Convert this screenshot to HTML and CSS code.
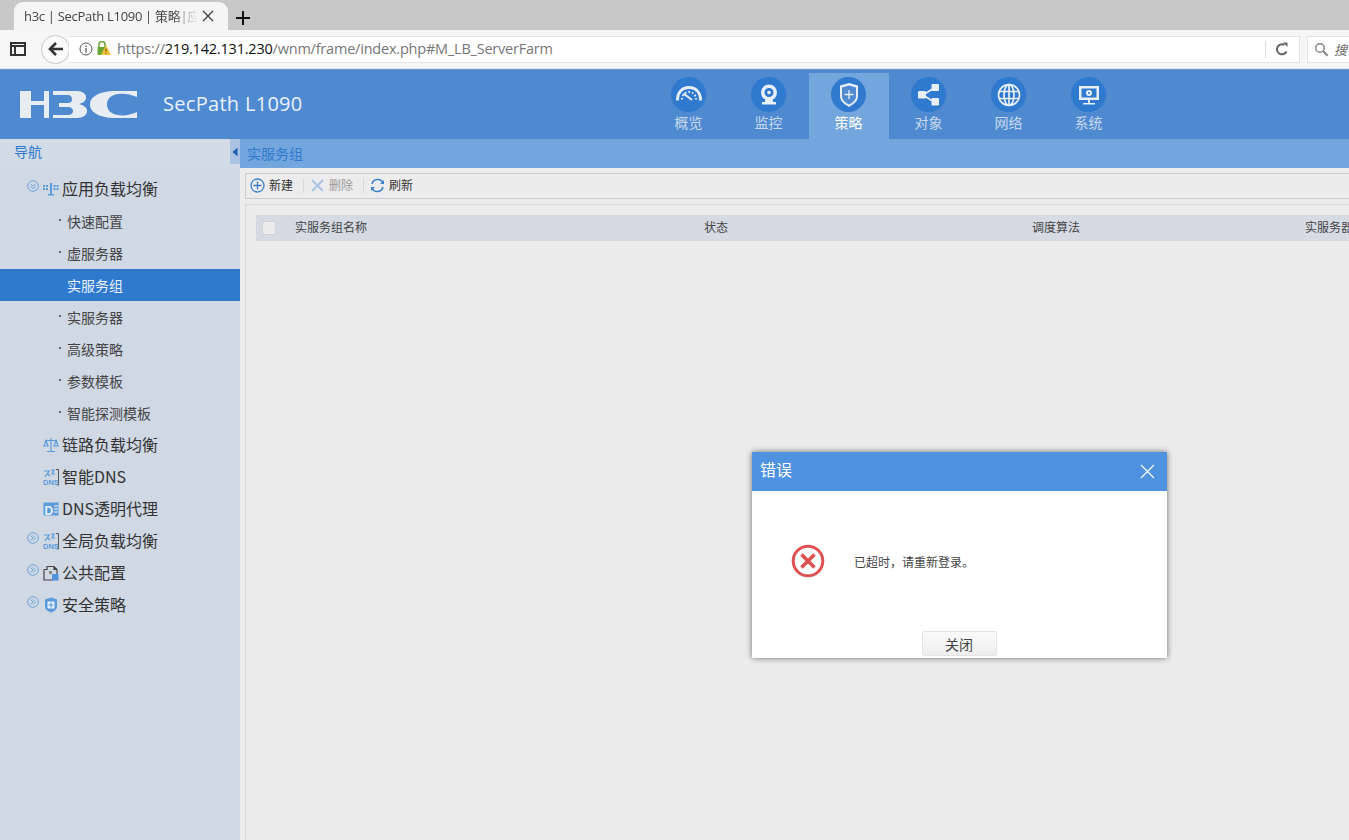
FILE: index.html
```html
<!DOCTYPE html>
<html lang="zh">
<head>
<meta charset="utf-8">
<title>h3c | SecPath L1090</title>
<link rel="stylesheet" href="styles.css">
</head>
<body>
<div class="tabbar">
  <div class="tab">
    <span class="tab-title">h3c | SecPath L1090 | 策略|应用负载均衡</span>
    <svg class="tab-x" width="14" height="14" viewBox="0 0 14 14"><path d="M2 2l10 10M12 2L2 12" stroke="#333" stroke-width="1.1" fill="none"/></svg>
  </div>
  <svg class="tab-new" width="14" height="14" viewBox="0 0 14 14"><path d="M7 0v14M0 7h14" stroke="#111" stroke-width="2"/></svg>
</div>
<div class="toolbar">
  <svg class="sidebar-btn" width="16" height="14" viewBox="0 0 16 14"><path d="M1 1h14v12H1zM1 4h14M5 4v9" stroke="#333" stroke-width="2" fill="none"/></svg>
  <div class="back-btn"><svg width="16" height="14" viewBox="0 0 16 14"><path d="M8 1L2 7l6 6M2 7h13" stroke="#333" stroke-width="2.6" fill="none"/></svg></div>
  <div class="urlbar">
    <svg class="info" width="16" height="16" viewBox="0 0 16 16"><circle cx="8" cy="8" r="6" stroke="#555" fill="none"/><path d="M8 7v4.500M8 4.500v1.500" stroke="#555" stroke-width="1.300"/></svg>
    <svg class="lock" width="14" height="16" viewBox="0 0 14 16"><path d="M2 6V3.500a3 3 0 0 1 6 0V6" stroke="#6aa53a" stroke-width="1.600" fill="none"/><rect x="0.500" y="6" width="9" height="8" fill="#6aa53a"/><path d="M9 4l5 10H4z" fill="#f2c33a"/><path d="M9 7.500v3.500M9 12v1" stroke="#6b5310"/></svg>
    <span class="url"><span class="url-dim">https://</span>219.142.131.230<span class="url-dim">/wnm/frame/index.php#M_LB_ServerFarm</span></span>
    <span class="reload"><svg width="14" height="14" viewBox="0 0 14 14"><path d="M11.500 9.500A5 5 0 1 1 9.500 3" stroke="#666" stroke-width="2" fill="none"/><path d="M8 0.500h4.500V5z" fill="#666"/></svg></span>
  </div>
  <div class="searchbar">
    <svg width="15" height="15" viewBox="0 0 15 15"><circle cx="6" cy="6" r="4.300" stroke="#888" stroke-width="1.500" fill="none"/><path d="M9.200 9.200l4.500 4.500" stroke="#888" stroke-width="2"/></svg>
    <span class="search-text">搜</span>
  </div>
</div>

<header class="app-header">
  <svg class="logo" width="118" height="29" viewBox="0 0 118 29">
    <path fill="#e8edf3" d="M0 1h11v10h13V1h5v27h-5V15H11v13H0z"/>
    <path fill="#e8edf3" d="M33 1h24c6 0 9 3 9 6.500S63 13 59 14c4 1 8 3 8 7s-4 7-10 7H33v-3h15c3 0 5-1.500 5-4s-2-4-5-4H39v-4h9c3 0 4-1.500 4-3.500S51 5 48 5H33z"/>
    <path fill="#e8edf3" d="M117 1v6c-7-3-13-4-19-3-7 1-11 5-11 10.500S91 24 98 25c6 1 12 0 19-3v6H95C81 28 70 23 70 14.500S81 1 95 1z"/>
  </svg>
  <div class="product">SecPath L1090</div>
  <nav class="topnav">
    <div class="topnav-item">
      <span class="topnav-icon"><svg width="26" height="24" viewBox="0 0 26 24"><path d="M1.500 17.500C1 10 6 4.500 13 4.500S25 10 24.500 17.500" fill="none" stroke="#e8eff8" stroke-width="2.800"/><path d="M6 16.500C6 12 9 9 13 9s7 3 7 7.500" fill="none" stroke="#e8eff8" stroke-width="2" stroke-dasharray="1.600 2"/><path d="M7.500 10.500l8.500 6.500" stroke="#e8eff8" stroke-width="2"/></svg></span>
      <span>概览</span>
    </div>
    <div class="topnav-item">
      <span class="topnav-icon"><svg width="24" height="24" viewBox="0 0 24 24"><circle cx="12" cy="9.500" r="8" fill="#e8eff8"/><circle cx="12" cy="9.500" r="4.500" fill="#2f79cf"/><circle cx="12" cy="9.500" r="1.800" fill="#e8eff8"/><path d="M8 17h8v2h3v2.500H5V19h3z" fill="#e8eff8"/></svg></span>
      <span>监控</span>
    </div>
    <div class="topnav-item active">
      <span class="topnav-icon"><svg width="24" height="26" viewBox="0 0 24 26" fill="none" stroke="#e8eff8"><path d="M12 1l9 2.500V14c0 5-4 8-9 11C7 22 3 19 3 14V3.500z" fill="#e8eff8" stroke="none"/><path d="M12 3.500l7 2V14c0 4-3 6.500-7 8.500-4-2-7-4.500-7-8.500V5.500z" fill="#4f8ad1" stroke="none"/><path d="M12 8v9M7.500 12.500h9" stroke-width="1.300"/></svg></span>
      <span>策略</span>
    </div>
    <div class="topnav-item">
      <span class="topnav-icon"><svg width="24" height="24" viewBox="0 0 24 24" fill="#e8eff8"><path d="M17 5L6 12l11 7" stroke="#e8eff8" stroke-width="1.600" fill="none"/><rect x="1" y="8" width="8" height="7.500" rx="1"/><rect x="14.500" y="1" width="7.500" height="7" rx="1"/><rect x="14.500" y="15" width="7.500" height="7.500" rx="1"/></svg></span>
      <span>对象</span>
    </div>
    <div class="topnav-item">
      <span class="topnav-icon"><svg width="24" height="24" viewBox="0 0 24 24" fill="none" stroke="#e8eff8" stroke-width="1.700"><circle cx="12" cy="12" r="10.500"/><ellipse cx="12" cy="12" rx="5" ry="10.500"/><path d="M12 1.500v21M2 8.500h20M2 15.500h20"/></svg></span>
      <span>网络</span>
    </div>
    <div class="topnav-item">
      <span class="topnav-icon"><svg width="24" height="24" viewBox="0 0 24 24"><path d="M2 3h20v14H2z" fill="#e8eff8"/><path d="M4.500 5.500h15v9h-15z" fill="#2f79cf"/><circle cx="12" cy="10" r="3" fill="#e8eff8"/><circle cx="12" cy="10" r="1" fill="#2f79cf"/><path d="M11 17h2v3h5v1.500H6V20h5z" fill="#e8eff8"/></svg></span>
      <span>系统</span>
    </div>
  </nav>
</header>

<div class="app-body">
  <aside class="sidebar">
    <div class="nav-title"><span class="nav-label">导航</span><span class="collapse"><svg width="6" height="10" viewBox="0 0 6 10"><path d="M5.500 0.500v9L0.500 5z" fill="#1d5fae"/></svg></span></div>
    <ul class="tree">
      <li class="tree-row top">
        <svg class="chev" width="12" height="12" viewBox="0 0 12 12"><circle cx="6" cy="6" r="5.300" fill="none" stroke="#6ea3da"/><path d="M3.500 4l2.500 2 2.500-2M3.500 6.500L6 8.500l2.500-2" fill="none" stroke="#6ea3da"/></svg>
        <svg class="ico" width="16" height="14" viewBox="0 0 16 14" fill="#5b9bdc"><rect x="7" y="1" width="2" height="11"/><rect x="5" y="12" width="6" height="1.500"/><rect x="0" y="3" width="2" height="2"/><rect x="3" y="3" width="2" height="2"/><rect x="0" y="6" width="2" height="2"/><rect x="3" y="6" width="2" height="2"/><rect x="10.500" y="3" width="2" height="2"/><rect x="13.500" y="3" width="2" height="2"/><rect x="10.500" y="6" width="2" height="2"/><rect x="13.500" y="6" width="2" height="2"/></svg>
        <span class="label">应用负载均衡</span>
      </li>
      <li class="tree-row sub"><span class="dot"></span>快速配置</li>
      <li class="tree-row sub"><span class="dot"></span>虚服务器</li>
      <li class="tree-row sub selected">实服务组</li>
      <li class="tree-row sub"><span class="dot"></span>实服务器</li>
      <li class="tree-row sub"><span class="dot"></span>高级策略</li>
      <li class="tree-row sub"><span class="dot"></span>参数模板</li>
      <li class="tree-row sub"><span class="dot"></span>智能探测模板</li>
      <li class="tree-row top">
        <span class="chev-gap"></span>
        <svg class="ico" width="16" height="16" viewBox="0 0 16 16" fill="none" stroke="#5b9bdc" stroke-width="1.200"><path d="M8 1v13M4 14.500h8M2 3.500h12M3 3.500L1 9h4zM13 3.500L11 9h4z"/></svg>
        <span class="label">链路负载均衡</span>
      </li>
      <li class="tree-row top">
        <span class="chev-gap"></span>
        <svg class="ico" width="16" height="18" viewBox="0 0 16 18"><path d="M1 3h5L2 9M4 5l3 3M8 2h3l-2 4h3" fill="none" stroke="#5b9bdc" stroke-width="1.200"/><path d="M13 1.500h2.500V17H14" fill="none" stroke="#555"/><text class="mini-dns" x="0" y="16.500">DNS</text></svg>
        <span class="label">智能DNS</span>
      </li>
      <li class="tree-row top">
        <span class="chev-gap"></span>
        <svg class="ico" width="16" height="14" viewBox="0 0 16 14"><rect x="0.500" y="0.500" width="15" height="13" fill="#5b9bdc"/><text class="mini-d" x="1.500" y="12.500">D</text><path d="M11 4h4M11 7h4M11 10h4" stroke="#d0d8e4" stroke-width="1.300"/></svg>
        <span class="label">DNS透明代理</span>
      </li>
      <li class="tree-row top">
        <svg class="chev" width="12" height="12" viewBox="0 0 12 12"><circle cx="6" cy="6" r="5.300" fill="none" stroke="#6ea3da"/><path d="M3.500 3.500L6 6 3.500 8.500M6 3.500L8.500 6 6 8.500" fill="none" stroke="#6ea3da"/></svg>
        <svg class="ico" width="16" height="18" viewBox="0 0 16 18"><path d="M1 3h5L2 9M4 5l3 3M8 2h3l-2 4h3" fill="none" stroke="#5b9bdc" stroke-width="1.200"/><path d="M13 1.500h2.500V17H14" fill="none" stroke="#555"/><text class="mini-dns" x="0" y="16.500">DNS</text></svg>
        <span class="label">全局负载均衡</span>
      </li>
      <li class="tree-row top">
        <svg class="chev" width="12" height="12" viewBox="0 0 12 12"><circle cx="6" cy="6" r="5.300" fill="none" stroke="#6ea3da"/><path d="M3.500 3.500L6 6 3.500 8.500M6 3.500L8.500 6 6 8.500" fill="none" stroke="#6ea3da"/></svg>
        <svg class="ico" width="16" height="16" viewBox="0 0 16 16"><path d="M1 4.500h3V1.500h7l3 3v5M10 15H1V4.500M11 1.500v3h3" fill="none" stroke="#444" stroke-width="1.200"/><path d="M6 6h3v3H6z" fill="#888"/><rect x="9" y="9" width="6.500" height="6.500" fill="#4f92df"/></svg>
        <span class="label">公共配置</span>
      </li>
      <li class="tree-row top">
        <svg class="chev" width="12" height="12" viewBox="0 0 12 12"><circle cx="6" cy="6" r="5.300" fill="none" stroke="#6ea3da"/><path d="M3.500 3.500L6 6 3.500 8.500M6 3.500L8.500 6 6 8.500" fill="none" stroke="#6ea3da"/></svg>
        <svg class="ico" width="16" height="16" viewBox="0 0 16 16"><path d="M8 0.500l6 2v7c0 3-3 5-6 6-3-1-6-3-6-6v-7z" fill="#5b9bdc"/><rect x="4.500" y="4.500" width="7" height="7" rx="1" fill="#e8eff8"/><path d="M8 5.500v5M5.500 8h5" stroke="#5b9bdc" stroke-width="1.200"/></svg>
        <span class="label">安全策略</span>
      </li>
    </ul>
  </aside>
  <main class="main">
    <div class="crumb">实服务组</div>
    <div class="actions">
      <span class="action">
        <svg width="15" height="15" viewBox="0 0 15 15" fill="none" stroke="#3b7fc9" stroke-width="1.300"><circle cx="7.500" cy="7.500" r="6.500"/><path d="M7.500 3.500v8M3.500 7.500h8"/></svg><span class="action-text">新建</span>
      </span>
      <span class="sep"></span>
      <span class="action disabled">
        <svg width="15" height="15" viewBox="0 0 15 15"><path d="M2 2l11 11M13 2L2 13" stroke="#a9c4e2" stroke-width="2"/></svg><span class="action-text">删除</span>
      </span>
      <span class="sep"></span>
      <span class="action">
        <svg width="15" height="15" viewBox="0 0 15 15" fill="none" stroke="#3b7fc9" stroke-width="1.500"><path d="M2 6a5.800 5.800 0 0 1 11-1M13 9a5.800 5.800 0 0 1-11 1"/><path d="M14 2v4h-4zM1 13V9h4z" fill="#3b7fc9" stroke="none"/></svg><span class="action-text">刷新</span>
      </span>
    </div>
    <div class="content">
      <div class="thead">
        <span class="check"></span>
        <span class="col col-name">实服务组名称</span>
        <span class="col col-state">状态</span>
        <span class="col col-algo">调度算法</span>
        <span class="col col-real">实服务器</span>
      </div>
    </div>
  </main>
</div>

<section class="dialog">
  <div class="dialog-head">
    <span class="dialog-title">错误</span>
    <svg width="15" height="15" viewBox="0 0 15 15"><path d="M1 1l13 13M14 1L1 14" stroke="#fff" stroke-width="1.100"/></svg>
  </div>
  <div class="dialog-body">
    <svg width="34" height="34" viewBox="0 0 34 34" fill="none" stroke="#de5151"><circle cx="17" cy="17" r="14.800" stroke-width="3"/><path d="M10.500 10.500l13 13M23.500 10.500l-13 13" stroke-width="3.600"/></svg>
    <span class="message">已超时<span class="comma">，</span>请重新登录。</span>
  </div>
  <div class="dialog-foot"><button class="close-btn">关闭</button></div>
</section>
</body>
</html>
```
FILE: styles.css
```css
* { box-sizing: border-box; }
html, body { margin: 0; height: 100%; overflow: hidden; }
body {
  font-family: "Noto Sans CJK SC", "Noto Sans", sans-serif;
  background: #ececec;
  color: #333;
  display: flex;
  flex-direction: column;
  height: 840px;
}
svg { display: block; flex: none; }

.tabbar { height: 30px; background: #c8c8c8; display: flex; align-items: flex-end; padding-left: 14px; flex: none; }
.tab {
  width: 214px; height: 28px; background: #f5f5f5; border-radius: 9px 9px 0 0;
  display: flex; align-items: center; padding: 0 13px 0 10px;
}
.tab-title {
  flex: 1; min-width: 0; white-space: nowrap; overflow: hidden; font: 13px/18px "Open Sans", "Noto Sans CJK SC", sans-serif; color: #444;
  letter-spacing: -0.3px;
  -webkit-mask-image: linear-gradient(to right, #000 85%, transparent);
  mask-image: linear-gradient(to right, #000 85%, transparent);
}
.tab-x { margin-left: 3px; }
.tab-new { margin: 0 0 5px 8px; }

.toolbar { height: 39px; background: #f6f6f6; border-bottom: 1px solid #dfe3e8; display: flex; align-items: center; padding-left: 10px; flex: none; }
.sidebar-btn { margin-right: 15px; }
.back-btn {
  width: 29px; height: 29px; border: 1px solid #c8c8c8; border-radius: 50%; background: #fafafa;
  display: flex; align-items: center; justify-content: center; margin-right: -1px; flex: none;
}
.urlbar {
  width: 1231px; height: 27px; background: #fff; border: 1px solid #e4e4e4; border-left: 0;
  display: flex; align-items: center; padding-left: 9px; flex: none;
}
.info { margin-right: 3px; }
.lock { margin-right: 6px; }
.url { flex: 1; font: 14.500px/20px "Open Sans", sans-serif; color: #111; white-space: nowrap; letter-spacing: -0.21px; }
.url-dim { color: #777; }
.reload { width: 34px; height: 100%; display: flex; align-items: center; justify-content: center; position: relative; }
.reload::before { content: ""; position: absolute; left: 0; top: 4px; bottom: 4px; width: 1px; background: #ddd; }
.searchbar {
  margin-left: 7px; height: 27px; flex: 1; min-width: 0; background: #fff; border: 1px solid #e4e4e4; border-right: 0;
  display: flex; align-items: center; padding-left: 6px; gap: 5px;
}
.search-text { font-size: 13px; font-style: italic; color: #666; white-space: nowrap; }

.app-header { height: 70px; background: #4f8ad1; display: flex; position: relative; flex: none; border-top: 1px solid #6b9ad4; }
.logo { margin: 20px 0 0 20px; }
.product { margin: 19px 0 0 25px; font: 20px/30px "Open Sans", sans-serif; color: #eaf1f9; white-space: nowrap; letter-spacing: 0.3px; }
.topnav { display: flex; margin-left: 346px; padding-top: 3px; }
.topnav-item {
  width: 80px; height: 66px; display: flex; flex-direction: column; align-items: center; color: #c8d9ee; font-size: 14px; line-height: 20px; padding-top: 4px;
}
.topnav-item.active { background: #72a6dc; color: #fff; }
.topnav-icon { width: 35px; height: 35px; border-radius: 50%; background: #2f79cf; display: flex; align-items: center; justify-content: center; }

.app-body { flex: 1; display: flex; min-height: 0; }
.sidebar { width: 240px; background: #d0d8e4; flex: none; }
.nav-title {
  height: 29px; padding-left: 14px; display: flex; justify-content: space-between; align-items: flex-start;
  font-size: 14px; color: #2f79cf; background: #d3dbe6;
}
.nav-label { line-height: 24px; }
.collapse { width: 10px; height: 25px; background: #a9c4e2; display: flex; align-items: center; justify-content: center; }
.tree { list-style: none; margin: 5px 0 0; padding: 0; }
.tree-row { height: 32px; display: flex; align-items: center; white-space: nowrap; }
.tree-row.top { font-size: 16px; color: #333; padding-left: 27px; }
.label { margin-top: -2px; }
.chev { margin: -7px 4px 0 0; }
.chev-gap { width: 16px; flex: none; }
.ico { margin-right: 3px; }
.tree-row.sub { font-size: 14px; color: #444; padding-left: 59px; }
.dot { width: 2px; height: 2px; background: #666; margin-right: 6px; flex: none; margin-top: -3px; }
.tree-row.selected { background: #2f79cf; color: #e8f0f9; padding-left: 67px; }
.mini-dns { font: 700 7.500px "Liberation Sans", sans-serif; fill: #5b9bdc; }
.mini-d { font: 700 12px "Liberation Sans", sans-serif; fill: #e8eff8; }

.main { flex: 1; min-width: 0; display: flex; flex-direction: column; }
.crumb { height: 29px; background: #72a6dc; color: #2f79cf; font-size: 14px; line-height: 28px; padding-left: 7px; flex: none; }
.actions {
  height: 26px; margin: 5px 0 0 5px; background: #ececec; border: 1px solid #c9cdd3; border-right: 0;
  display: flex; align-items: center; padding: 0 0 2px 4px; flex: none; font-size: 12px;
}
.action { display: flex; align-items: center; gap: 4px; color: #333; }
.action.disabled { color: #999; }
.action-text { line-height: 16px; margin-top: -1px; }
.sep { width: 1px; height: 15px; background: #d5d8dc; margin: 0 6px 0 10px; }
.content { flex: 1; margin: 5px 0 0 5px; border: 1px solid #d5d8dc; border-right: 0; border-bottom: 0; padding: 10px 0 0 10px; }
.thead { height: 26px; background: #d5dae3; display: flex; align-items: center; font-size: 12px; line-height: 22px; color: #444; position: relative; overflow: hidden; }
.check { width: 14px; height: 14px; background: #ececec; border: 1px solid #d0d3d8; margin-left: 6px; flex: none; }
.col { flex: none; white-space: nowrap; margin-top: -2px; }
.col-name { margin-left: 19px; width: 409px; }
.col-state { width: 328px; }
.col-algo { width: 273px; }

.dialog {
  position: absolute; left: 752px; top: 452px; width: 415px; height: 206px; background: #fff;
  box-shadow: 0 0 6px rgba(0, 0, 0, .55); display: flex; flex-direction: column;
}
.dialog-head { height: 39px; background: #4f92df; color: #fff; font-size: 16px; display: flex; align-items: center; justify-content: space-between; padding: 0 12px 0 8px; flex: none; }
.dialog-title { margin-top: -5px; }
.dialog-body { flex: 1; display: flex; align-items: center; padding: 0 0 0 39px; gap: 29px; margin-top: -1px; }
.message { font-size: 12px; color: #444; }
.comma { font-family: "Noto Sans CJK TC", sans-serif; }
.dialog-foot { height: 27px; display: flex; justify-content: center; align-items: flex-start; flex: none; padding-right: 1px; margin-top: -1px; }
.close-btn {
  width: 75px; height: 25px; padding: 0; border: 1px solid #e4e4e4; border-radius: 2px; font: 14px "Noto Sans CJK SC", sans-serif; color: #444;
  background: linear-gradient(#fafafa, #eee);
}
```
